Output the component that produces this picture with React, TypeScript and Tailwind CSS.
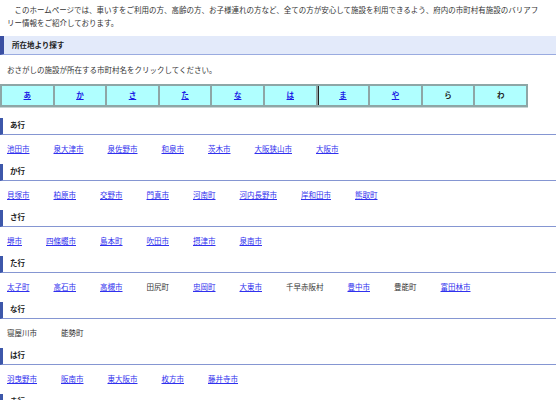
import React from "react";

type City = { name: string; link?: boolean };

const tabs = [
  { label: "あ", link: true },
  { label: "か", link: true },
  { label: "さ", link: true },
  { label: "た", link: true },
  { label: "な", link: true },
  { label: "は", link: true },
  { label: "ま", link: true },
  { label: "や", link: true },
  { label: "ら", link: false },
  { label: "わ", link: false },
];

const L = (name: string): City => ({ name, link: true });
const T = (name: string): City => ({ name });

const sections: { title: string; cities: City[] }[] = [
  { title: "あ行", cities: [L("池田市"), L("泉大津市"), L("泉佐野市"), L("和泉市"), L("茨木市"), L("大阪狭山市"), L("大阪市")] },
  { title: "か行", cities: [L("貝塚市"), L("柏原市"), L("交野市"), L("門真市"), L("河南町"), L("河内長野市"), L("岸和田市"), L("熊取町")] },
  { title: "さ行", cities: [L("堺市"), L("四條畷市"), L("島本町"), L("吹田市"), L("摂津市"), L("泉南市")] },
  {
    title: "た行",
    cities: [L("太子町"), L("高石市"), L("高槻市"), T("田尻町"), L("忠岡町"), L("大東市"), T("千早赤阪村"), L("豊中市"), T("豊能町"), L("富田林市")],
  },
  { title: "な行", cities: [T("寝屋川市"), T("能勢町")] },
  { title: "は行", cities: [L("羽曳野市"), L("阪南市"), L("東大阪市"), L("枚方市"), L("藤井寺市")] },
  { title: "ま行", cities: [L("松原市"), L("箕面市"), L("守口市")] },
];

export default function App() {
  return (
    <div
      className="w-[556px] bg-white text-[7.5px] text-[#333] leading-[12.5px]"
      style={{ fontFamily: '"Noto Sans CJK JP", "Noto Sans", sans-serif' }}
    >
      <p className="pt-[4px] pl-[7px] pr-[16px] indent-[1em]">
        このホームページでは、車いすをご利用の方、高齢の方、お子様連れの方など、全ての方が安心して施設を利用できるよう、府内の市町村有施設のバリアフリー情報をご紹介しております。
      </p>

      <div className="mt-[7px] flex h-[19px] items-center border-b border-l-4 border-b-[#9aabe0] border-l-[#3a4fa2] bg-[#e3eafa] pl-[8px] font-bold text-[#222]">
        所在地より探す
      </div>

      <p className="mt-[9px] pl-[7px]">おさがしの施設が所在する市町村名をクリックしてください。</p>

      <div className="mt-[7px] grid h-[23px] w-[528px] grid-cols-10 gap-[2px] bg-[#8ea6a6] p-[2px] shadow-[0_1px_0_#c8d4d4]">
        {tabs.map((t) => (
          <div
            key={t.label}
            className={
              "flex items-center justify-center bg-[#b0ffff] font-bold " +
              (t.label === "ま" ? "shadow-[inset_1px_0_0_#222]" : "")
            }
          >
            {t.link ? (
              <a href="#" className="text-[#1a1ae6] underline underline-offset-1">
                {t.label}
              </a>
            ) : (
              <span className="text-[#222]">{t.label}</span>
            )}
          </div>
        ))}
      </div>

      <div className="mt-[11px]">
        {sections.map((s) => (
          <section key={s.title}>
            <h3 className="flex h-[17px] items-center border-b border-l-[3px] border-b-[#8596d2] border-l-[#3d57aa] pl-[7px] font-bold text-[#222]">
              {s.title}
            </h3>
            <ul className="flex h-[29px] items-center gap-[24px] pl-[7px]">
              {s.cities.map((c) => (
                <li key={c.name}>
                  {c.link ? (
                    <a href="#" className="text-[#3030ee] underline underline-offset-1">
                      {c.name}
                    </a>
                  ) : (
                    <span>{c.name}</span>
                  )}
                </li>
              ))}
            </ul>
          </section>
        ))}
      </div>
    </div>
  );
}
